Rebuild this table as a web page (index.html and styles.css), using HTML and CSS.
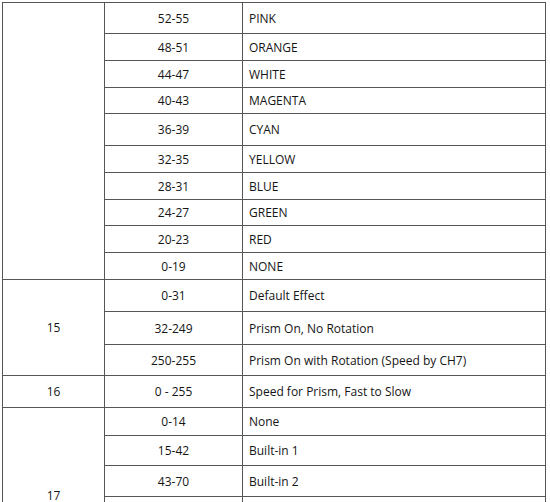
FILE: index.html
```html
<!DOCTYPE html>
<html>
<head>
<meta charset="utf-8">
<link rel="stylesheet" href="styles.css">
</head>
<body>
<div class="sheet">
  <div class="ch g1"></div>
  <div class="val h30">52-55</div><div class="fn h30">PINK</div>
  <div class="val h26">48-51</div><div class="fn h26">ORANGE</div>
  <div class="val h26">44-47</div><div class="fn h26">WHITE</div>
  <div class="val h25">40-43</div><div class="fn h25">MAGENTA</div>
  <div class="val h31">36-39</div><div class="fn h31">CYAN</div>
  <div class="val h26">32-35</div><div class="fn h26">YELLOW</div>
  <div class="val h26">28-31</div><div class="fn h26">BLUE</div>
  <div class="val h25">24-27</div><div class="fn h25">GREEN</div>
  <div class="val h26">20-23</div><div class="fn h26">RED</div>
  <div class="val h26">0-19</div><div class="fn h26">NONE</div>

  <div class="ch g3">15</div>
  <div class="val h31">0-31</div><div class="fn h31">Default Effect</div>
  <div class="val h32">32-249</div><div class="fn h32">Prism On, No Rotation</div>
  <div class="val h30">250-255</div><div class="fn h30">Prism On with Rotation (Speed by CH7)</div>

  <div class="ch">16</div>
  <div class="val h31">0 - 255</div><div class="fn h31">Speed for Prism, Fast to Slow</div>

  <div class="ch g6">17</div>
  <div class="val h27">0-14</div><div class="fn h27">None</div>
  <div class="val h29">15-42</div><div class="fn h29">Built-in 1</div>
  <div class="val h30">43-70</div><div class="fn h30">Built-in 2</div>
  <div class="val h28">71-98</div><div class="fn h28">Built-in 3</div>
  <div class="val h28">99-126</div><div class="fn h28">Built-in 4</div>
  <div class="val h28">127-154</div><div class="fn h28">Built-in 5</div>
</div>
</body>
</html>
```
FILE: styles.css
```css
html, body {
  margin: 0;
  padding: 0;
  background: #ffffff;
  overflow: hidden;
}
body {
  padding: 2px 0 0 2px;
  font-family: "Open Sans", "Noto Sans", sans-serif;
  font-size: 12px;
  color: #151515;
}
.sheet {
  display: grid;
  grid-template-columns: 101px 137px 302px;
  gap: 1px;
  padding: 1px;
  width: max-content;
  background: #555555;
}
.sheet > div {
  background: #ffffff;
  display: flex;
  align-items: center;
}
.ch {
  grid-column: 1;
  justify-content: center;
}
.g1 { grid-row: span 10; }
.g3 { grid-row: span 3; }
.g6 { grid-row: span 6; }
.val {
  grid-column: 2;
  justify-content: center;
}
.fn {
  grid-column: 3;
  padding-left: 6px;
}
.h25 { height: 25px; }
.h26 { height: 26px; }
.h27 { height: 27px; }
.h28 { height: 28px; }
.h29 { height: 29px; }
.h30 { height: 30px; }
.h31 { height: 31px; }
.h32 { height: 32px; }
```
